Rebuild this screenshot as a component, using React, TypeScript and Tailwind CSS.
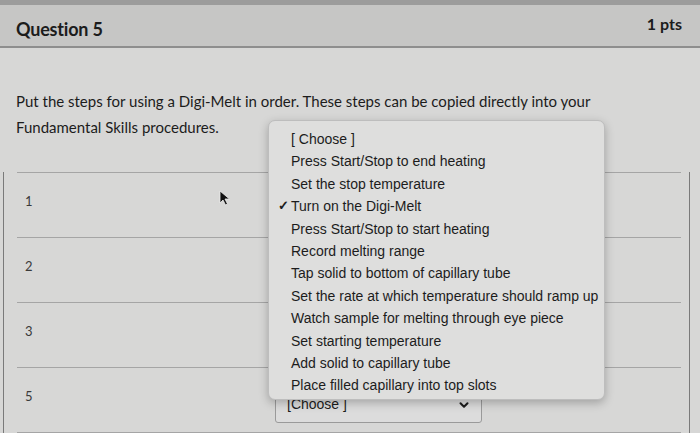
import { ChevronDown } from 'lucide-react';

const options = [
  '[ Choose ]',
  'Press Start/Stop to end heating',
  'Set the stop temperature',
  'Turn on the Digi-Melt',
  'Press Start/Stop to start heating',
  'Record melting range',
  'Tap solid to bottom of capillary tube',
  'Set the rate at which temperature should ramp up',
  'Watch sample for melting through eye piece',
  'Set starting temperature',
  'Add solid to capillary tube',
  'Place filled capillary into top slots',
];

const rows = ['1', '2', '3', '5'];

export default function App() {
  return (
    <div className="relative w-[700px] h-[433px] overflow-hidden bg-[#d7d7d6] text-[#1c1c1c] font-['Lato','Liberation_Sans',sans-serif]">
      <div className="h-[5px] bg-[#9c9c9c]" />
      {/* header */}
      <div className="h-[43px] bg-[#c6c6c5] border-b-2 border-[#8e8e8e] flex items-start justify-between px-4 pt-[15px]">
        <h2 className="text-[18px] font-bold leading-none tracking-[-0.2px]">Question 5</h2>
        <span className="text-[16px] font-bold leading-none -mt-[4px] pr-[2px]">1 pts</span>
      </div>

      {/* body */}
      <div className="pt-[40px] px-4 text-[15px] leading-[26px]">
        <p className="w-fit">Put the steps for using a Digi-Melt in order. These steps can be copied directly into your</p>
        <p className="w-fit">Fundamental Skills procedures.</p>
      </div>

      <div className="mt-[32px] ml-[3px] mr-[10px] border-l border-r border-[#7a7a7a] pl-[13px] pr-[8px] h-[270px]">
        {rows.map((n) => (
          <div key={n} className="h-[65px] border-t border-[#a5a5a5] flex items-center pb-[6px] pl-[8px] text-[13px] text-[#3a3a3a]">
            {n}
          </div>
        ))}
        <div className="border-t border-[#a5a5a5]" />
      </div>

      {/* mouse cursor */}
      <svg className="absolute left-[219px] top-[190px]" width="12" height="16" viewBox="0 0 12 16">
        <path d="M1 1 L1 13 L4 10 L6.5 15 L8.5 14 L6 9 L10.5 9 Z" fill="#111" stroke="#eee" strokeWidth="0.8" />
      </svg>

      {/* select below open menu */}
      <div className="absolute left-[275px] top-[393px] w-[207px] h-[30px] border border-[#9a9a9a] rounded-[3px] bg-[#dcdcdc] flex items-center justify-between pl-[11px] pr-[10px] font-['Liberation_Sans',sans-serif] text-[14px]">
        <span className="-mt-[8px]">[Choose ]</span>
        <ChevronDown className="-mt-[6px]" size={14} strokeWidth={3.5} />
      </div>

      {/* open dropdown menu */}
      <div className="absolute left-[268px] top-[120px] w-[337px] h-[280px] rounded-[7px] bg-[#dededd] border border-[#bdbdbd] shadow-[0_3px_10px_rgba(0,0,0,0.25)] pt-[7px] font-['Liberation_Sans',sans-serif] text-[14px]">
        {options.map((o, i) => (
          <div key={o} className="relative h-[22.4px] leading-[22px] pl-[22px] whitespace-nowrap">
            {i === 3 && <span className="absolute left-[9px] top-0 text-[13px] font-bold">✓</span>}
            {o}
          </div>
        ))}
      </div>
    </div>
  );
}
